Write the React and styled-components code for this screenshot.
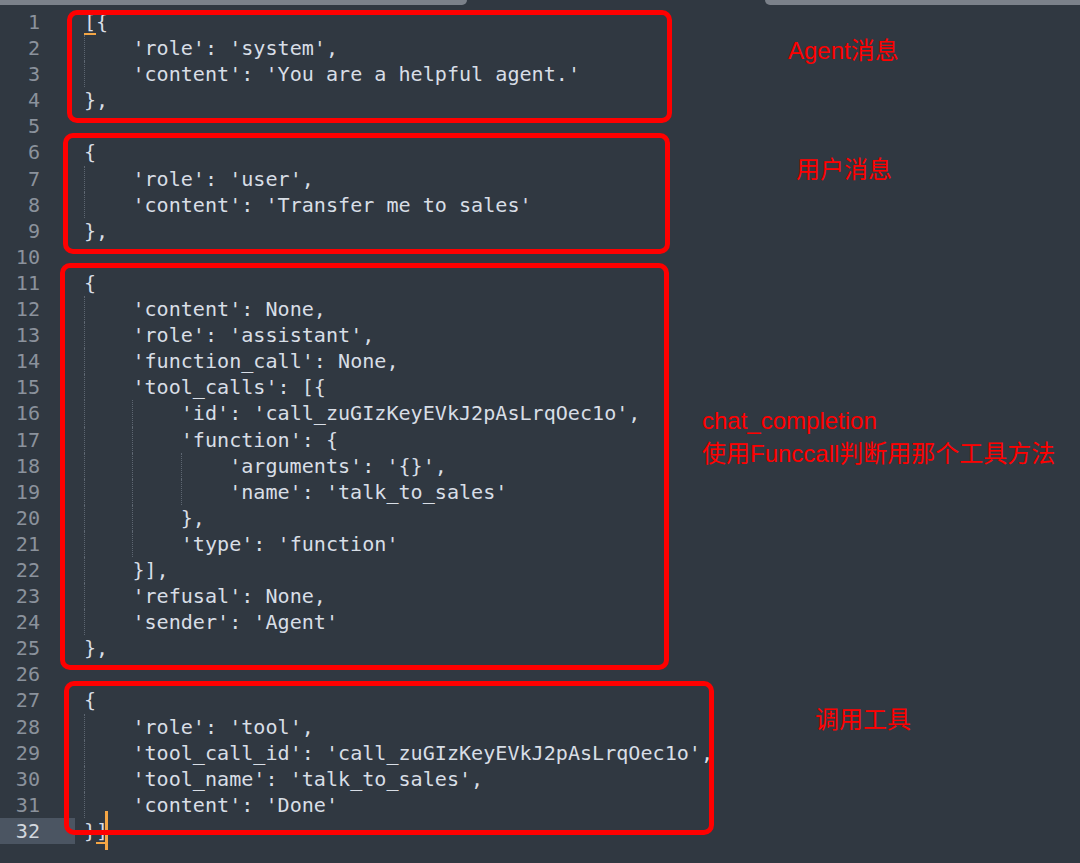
import React from 'react';
import styled, { createGlobalStyle } from 'styled-components';

const GlobalStyle = createGlobalStyle`
  html, body {
    margin: 0;
    padding: 0;
    background-color: #303841;
  }
`

const Page = styled.div`
  position: relative;
  width: 1080px;
  height: 863px;
  overflow: hidden;
  background-color: #303841;
`
const TabStrip = styled.div`
  display: flex;
  height: 5px;
`
const Tab = styled.div`
  width: ${p => p.$width}px;
  background-color: #7b818a;
  border-radius: ${p => p.$side === 'left' ? '0 0 6px 0' : '0 0 0 6px'};
`
const Spacer = styled.div`
  flex: 1;
`
const Editor = styled.div`
  display: flex;
  flex-direction: column;
  padding-top: 4px;
  font-family: 'DejaVu Sans Mono', 'Liberation Mono', monospace;
  font-size: 20.1px;
  line-height: 26.1px;
`
const Row = styled.div`
  display: flex;
  height: 26.1px;
`
const LineNo = styled.div`
  width: 75px;
  box-sizing: border-box;
  padding-right: 35px;
  text-align: right;
  color: ${p => p.$active ? '#d3d8de' : '#8b929c'};
  background-color: ${p => p.$active ? '#4b5562' : 'transparent'};
`
const Code = styled.div`
  padding-left: 9px;
  white-space: pre;
  color: #d8dee6;
`
const Indent = styled.span`
  display: inline-block;
  width: 4ch;
  height: 26.1px;
  vertical-align: top;
  box-sizing: border-box;
  border-left: 1px dotted #5d6671;
`
const Match = styled.span`
  display: inline-block;
  height: 26.1px;
  vertical-align: top;
  box-shadow: inset 0 -2px 0 #f4a645;
`
const Caret = styled.span`
  position: relative;
  display: inline-block;
  width: 0;
  height: 26.1px;
  vertical-align: top;

  &::after {
    content: '';
    position: absolute;
    left: -3px;
    top: -7px;
    width: 3px;
    height: 39px;
    background-color: #f4a645;
  }
`
const Frame = styled.div`
  position: absolute;
  box-sizing: border-box;
  border: 5px solid #ff0000;
  border-radius: 10px;
`
const Note = styled.div`
  position: absolute;
  font-family: 'Liberation Sans', 'Noto Sans CJK SC', sans-serif;
  font-size: 24px;
  line-height: ${p => p.$lh || 28}px;
  color: #ff0000;
  white-space: nowrap;
`

const lines = [
  "[{",
  "    'role': 'system',",
  "    'content': 'You are a helpful agent.'",
  "},",
  "",
  "{",
  "    'role': 'user',",
  "    'content': 'Transfer me to sales'",
  "},",
  "",
  "{",
  "    'content': None,",
  "    'role': 'assistant',",
  "    'function_call': None,",
  "    'tool_calls': [{",
  "        'id': 'call_zuGIzKeyEVkJ2pAsLrqOec1o',",
  "        'function': {",
  "            'arguments': '{}',",
  "            'name': 'talk_to_sales'",
  "        },",
  "        'type': 'function'",
  "    }],",
  "    'refusal': None,",
  "    'sender': 'Agent'",
  "},",
  "",
  "{",
  "    'role': 'tool',",
  "    'tool_call_id': 'call_zuGIzKeyEVkJ2pAsLrqOec1o',",
  "    'tool_name': 'talk_to_sales',",
  "    'content': 'Done'",
  "}]",
];

const frames = [
  { left: 67, top: 10, width: 605, height: 113 },
  { left: 63, top: 133, width: 607, height: 121 },
  { left: 60, top: 263, width: 609, height: 407 },
  { left: 64, top: 681, width: 650, height: 154 },
];

const renderLine = (text, index) => {
  if (index === 0) {
    return (<><Match>[</Match>{'{'}</>);
  }
  if (index === lines.length - 1) {
    return (<>{'}'}<Match>]</Match><Caret /></>);
  }
  const depth = Math.floor((text.length - text.trimStart().length) / 4);
  const guides = [];
  for (let i = 0; i < depth; i++) {
    guides.push(<Indent key={i} />);
  }
  return (<>{guides}{text.trimStart()}</>);
}

const App = () => {
  return (
    <Page>
      <GlobalStyle />
      <TabStrip>
        <Tab $width={467} $side="left" />
        <Spacer />
        <Tab $width={315} $side="right" />
      </TabStrip>
      <Editor>
        { lines.map((text, index) => (
          <Row key={index}>
            <LineNo $active={index === lines.length - 1}>{index + 1}</LineNo>
            <Code>{ renderLine(text, index) }</Code>
          </Row>
        )) }
      </Editor>
      { frames.map((f, i) => (
        <Frame key={i} style={{ left: f.left, top: f.top, width: f.width, height: f.height }} />
      )) }
      <Note style={{ left: 788, top: 37 }}>Agent消息</Note>
      <Note style={{ left: 796, top: 156 }}>用户消息</Note>
      <Note $lh={33} style={{ left: 702, top: 404 }}>
        chat_completion<br />使用Funccall判断用那个工具方法
      </Note>
      <Note style={{ left: 815, top: 706 }}>调用工具</Note>
    </Page>
  );
}

export default App;
